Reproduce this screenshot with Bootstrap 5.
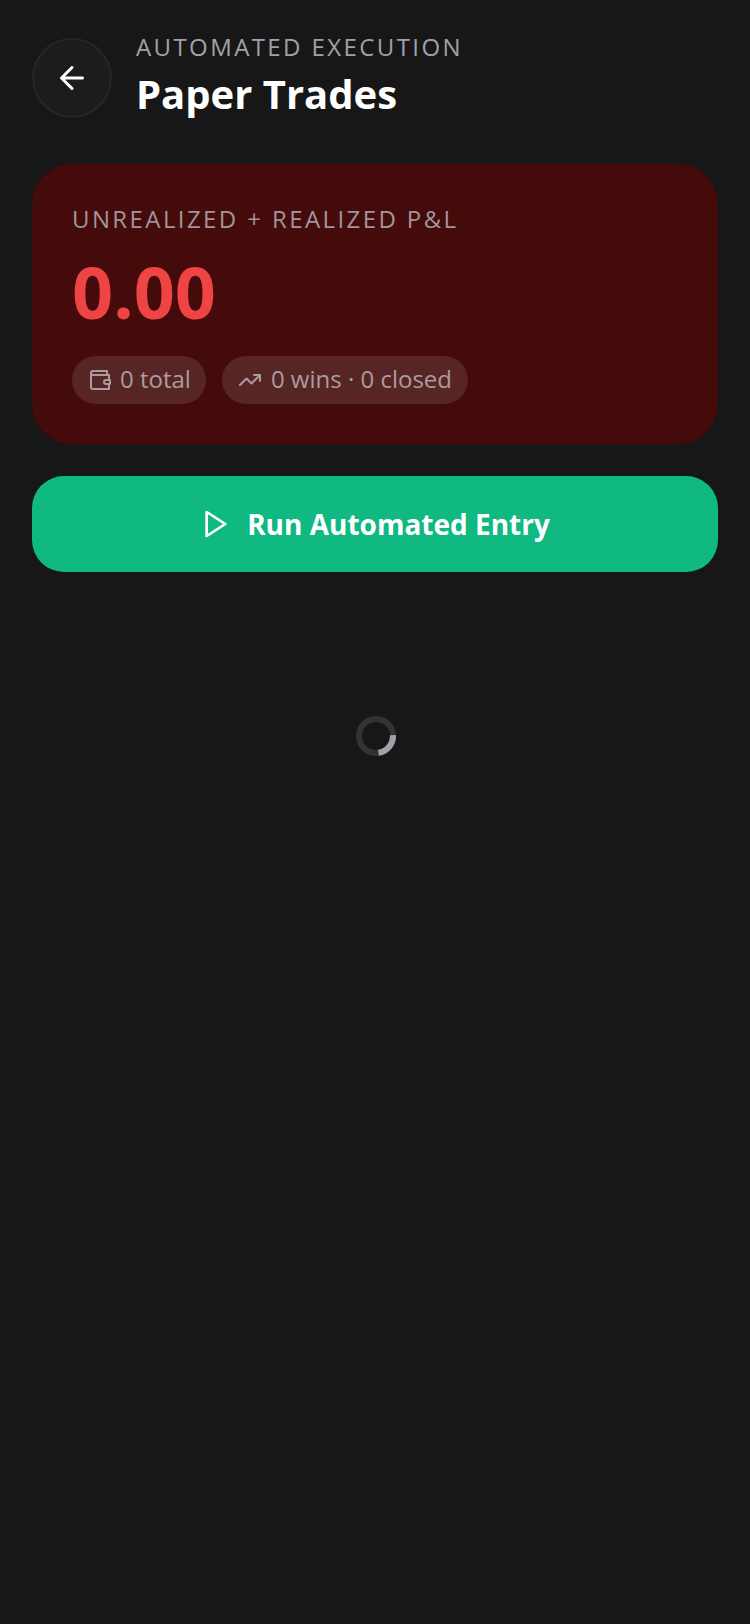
<!DOCTYPE html>
<html lang="en">
<head>
  <meta charset="UTF-8" />
  <meta name="viewport" content="width=device-width, initial-scale=1.0"/>
  <title>Paper Trades</title>
  <link href="https://cdn.jsdelivr.net/npm/bootstrap@5.3.0/dist/css/bootstrap.min.css" rel="stylesheet"/>
  <style>
    body {
      background-color: #171717;
      font-family: "Open Sans", sans-serif;
      min-height: 1624px;
    }
    .page-wrap {
      padding: 32px 32px 0;
    }
    .back-btn {
      width: 80px;
      height: 80px;
      margin-top: 6px;
      background: #1c1c1c;
      border: 2px solid #262626;
      flex-shrink: 0;
    }
    .eyebrow {
      font-size: 24px;
      line-height: 30px;
      letter-spacing: 2.4px;
      color: #a1a1aa;
    }
    .page-title {
      font-size: 40px;
      line-height: 60px;
      margin-top: 2px;
      font-weight: 700;
      color: #fff;
    }
    .pnl-card {
      margin-top: 40px;
      padding: 39px 40px;
      height: 280px;
      background: #450a0a;
      border-radius: 40px;
    }
    .pnl-label {
      font-size: 24px;
      line-height: 32px;
      letter-spacing: 2.4px;
      color: #a1959b;
    }
    .pnl-value {
      font-size: 72px;
      line-height: 72px;
      margin-top: 20px;
      font-weight: 700;
      color: #ef4444;
    }
    .pnl-stats {
      margin-top: 29px;
    }
    .stat-pill {
      height: 48px;
      padding: 0 16px;
      background: #582525;
      border-radius: 24px;
      font-size: 24px;
      color: #a99c9e;
    }
    .stat-pill span {
      margin-bottom: 2px;
    }
    .pill-total {
      padding-right: 15px;
    }
    .pill-wins {
      gap: 9px;
    }
    .run-btn {
      margin-top: 32px;
      height: 96px;
      background: #10b981;
      border-radius: 32px;
      color: #fff;
      font-size: 28px;
      font-weight: 700;
      width: 100%;
      border: 0;
      gap: 15px;
    }
    .loader-ring {
      margin-top: 144px;
      margin-left: 1px;
    }
  </style>
</head>
<body>
  <div class="page-wrap">

    <!-- Header -->
    <div class="d-flex gap-4">
      <button class="back-btn rounded-circle d-flex align-items-center justify-content-center p-0" type="button" aria-label="Back">
        <svg width="36" height="36" viewBox="0 0 24 24" fill="none" stroke="#fff" stroke-width="2" stroke-linecap="round" stroke-linejoin="round"><path d="M19 12H5M12 19l-7-7 7-7"/></svg>
      </button>
      <div>
        <div class="eyebrow">AUTOMATED EXECUTION</div>
        <div class="page-title">Paper Trades</div>
      </div>
    </div>

    <!-- P&L card -->
    <div class="pnl-card">
      <div class="pnl-label">UNREALIZED + REALIZED P&amp;L</div>
      <div class="pnl-value">0.00</div>
      <div class="pnl-stats d-flex gap-3">
        <div class="stat-pill pill-total d-flex align-items-center gap-2">
          <svg width="24" height="24" viewBox="0 0 24 24" fill="none" stroke="#a99c9e" stroke-width="2" stroke-linecap="round" stroke-linejoin="round"><path d="M21 12V7H5a2 2 0 0 1 0-4h14v4"/><path d="M3 5v14a2 2 0 0 0 2 2h16v-5"/><path d="M18 12a2 2 0 0 0 0 4h4v-4Z"/></svg>
          <span>0 total</span>
        </div>
        <div class="stat-pill pill-wins d-flex align-items-center">
          <svg width="24" height="24" viewBox="0 0 24 24" fill="none" stroke="#a99c9e" stroke-width="2" stroke-linecap="round" stroke-linejoin="round"><path d="M22 7l-8.5 8.5-5-5L2 17"/><path d="M16 7h6v6"/></svg>
          <span>0 wins · 0 closed</span>
        </div>
      </div>
    </div>

    <!-- Run button -->
    <button class="run-btn d-flex align-items-center justify-content-center" type="button">
      <svg width="32" height="32" viewBox="0 0 24 24" fill="none" stroke="#fff" stroke-width="2" stroke-linecap="round" stroke-linejoin="round"><path d="M5 3l14 9-14 9V3z"/></svg>
      <span>Run Automated Entry</span>
    </button>

    <!-- Loading -->
    <div class="d-flex justify-content-center">
      <svg class="loader-ring" width="40" height="40" viewBox="0 0 40 40" fill="none">
        <circle cx="20" cy="20" r="17" stroke="#333" stroke-width="6"/>
        <path d="M37 19.2A17 17 0 0 1 22.5 36.8" stroke="#a1a1aa" stroke-width="6"/>
      </svg>
    </div>

  </div>
</body>
</html>
